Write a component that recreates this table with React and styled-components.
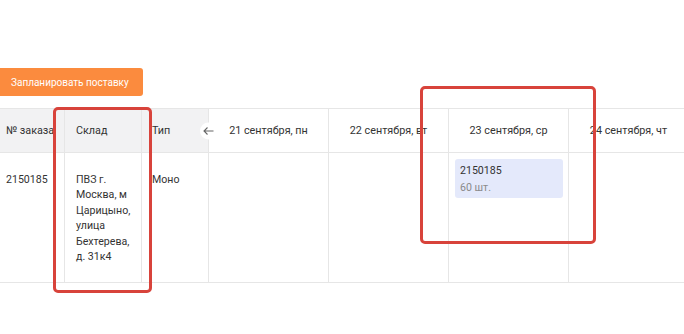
import React from 'react';
import styled, { createGlobalStyle } from 'styled-components';

const GlobalStyle = createGlobalStyle`
	body {
		margin: 0;
		background: #fff;
		font-family: Roboto, "Open Sans", sans-serif;
		color: #333;
	}
`;

const Page = styled.div`
	position: relative;
	width: 684px;
	height: 334px;
	overflow: hidden;
	padding-top: 68px;
	box-sizing: border-box;
`;

const PlanButton = styled.button`
	display: block;
	height: 28px;
	width: 146px;
	margin-left: -3px;
	padding: 0 0 0 14px;
	border: none;
	border-radius: 3px;
	background: #fb8b3e;
	color: #fff;
	font-family: inherit;
	font-size: 10px;
	text-align: left;
	cursor: pointer;
`;

const Table = styled.div`
	display: grid;
	grid-template-columns: 64px 77px 67px 120px 120px 120px 120px;
	grid-template-rows: 44px 129px;
	margin-top: 12px;
	width: 688px;
	border-top: 1px solid #e6e6e6;
	border-bottom: 1px solid #e6e6e6;
	box-sizing: border-box;
`;

const HeadCell = styled.div`
	position: relative;
	display: flex;
	align-items: center;
	justify-content: ${(p) => (p.$center ? 'center' : 'flex-start')};
	padding-left: ${(p) => p.$pad || 0}px;
	background: ${(p) => (p.$grey ? '#f2f2f3' : '#fff')};
	border-bottom: 1px solid #e6e6e6;
	border-left: ${(p) => (p.$first ? 'none' : '1px solid #e6e6e6')};
	font-size: 10.8px;
	white-space: nowrap;
	box-sizing: border-box;
`;

const Cell = styled.div`
	padding: ${(p) => (p.$card ? '6px 5px 0 6px' : `19px 8px 0 ${p.$pad || 0}px`)};
	border-left: ${(p) => (p.$first ? 'none' : '1px solid #e6e6e6')};
	font-size: 10.6px;
	line-height: 15.4px;
	box-sizing: border-box;
`;

const BackArrow = styled.div`
	position: absolute;
	left: -9px;
	top: 50%;
	transform: translateY(-50%);
	width: 17px;
	height: 17px;
	border-radius: 50%;
	background: #fff;
	display: flex;
	align-items: center;
	justify-content: center;
	z-index: 2;
`;

const Supply = styled.div`
	background: #e4e9fb;
	border-radius: 3px;
	padding: 3px 5px;
	height: 39px;
	box-sizing: border-box;
	font-size: 10.6px;
	line-height: 17px;
`;

const Qty = styled.div`
	color: #8a8a8a;
`;

const Mark = styled.div`
	position: absolute;
	border: 3px solid #d8433b;
	border-radius: 5px;
	box-sizing: border-box;
	pointer-events: none;
`;

const dates = ['21 сентября, пн', '22 сентября, вт', '23 сентября, ср', '24 сентября, чт'];

const App = () => {
	return (
		<>
			<GlobalStyle />
			<Page>
				<PlanButton>Запланировать поставку</PlanButton>
				<Table>
					<HeadCell $grey $first $pad={6}>№ заказа</HeadCell>
					<HeadCell $grey $pad={11}>Склад</HeadCell>
					<HeadCell $grey $pad={10}>Тип</HeadCell>
					{dates.map((d, i) => (
						<HeadCell key={d} $center>
							{i === 0 && (
								<BackArrow>
									<svg width="11" height="9" viewBox="0 0 11 9" fill="none">
										<path d="M10.5 4.5H1M4.5 1L1 4.5L4.5 8" stroke="#666" strokeWidth="1.1" />
									</svg>
								</BackArrow>
							)}
							{d}
						</HeadCell>
					))}

					<Cell $first $pad={6}>2150185</Cell>
					<Cell $pad={11}>ПВЗ г. Москва, м Царицыно, улица Бехтерева, д. 31к4</Cell>
					<Cell $pad={10}>Моно</Cell>
					<Cell />
					<Cell />
					<Cell $card>
						<Supply>
							<div>2150185</div>
							<Qty>60 шт.</Qty>
						</Supply>
					</Cell>
					<Cell />
				</Table>
				<Mark style={{ left: 53, top: 107, width: 99, height: 186 }} />
				<Mark style={{ left: 420, top: 86, width: 176, height: 158 }} />
			</Page>
		</>
	);
};

export default App;
